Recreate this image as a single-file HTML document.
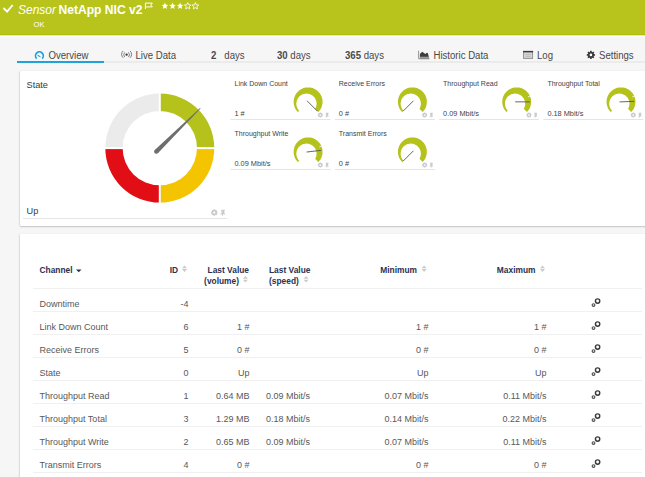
<!DOCTYPE html><html><head><meta charset="utf-8"><style>
*{box-sizing:border-box;margin:0;padding:0}
html,body{width:645px;height:477px;overflow:hidden;background:#f6f6f6;font-family:"Liberation Sans",sans-serif;color:#444}
.a{position:absolute;white-space:nowrap}
svg{position:absolute;left:0;top:0}
.tab{position:absolute;top:50.4px;font-size:9.6px;color:#484848;line-height:12px;white-space:nowrap;transform:scaleY(1.06);transform-origin:0 80%}
.tab b{color:#4a4a4a}
.panel{position:absolute;background:#fff;border-radius:1px;box-shadow:0 1px 1.5px rgba(0,0,0,0.2),-1px 0 1.5px rgba(0,0,0,0.08)}
.gt{position:absolute;font-size:7px;color:#3f3f3f;line-height:8px;white-space:nowrap}
.gl{position:absolute;height:1px;background:#e4e4e4}
.th{position:absolute;font-size:8.4px;font-weight:bold;color:#2b3150;line-height:10.6px;white-space:nowrap}
.td{position:absolute;font-size:9px;color:#585858;line-height:10px;white-space:nowrap;transform:scaleY(1.1);transform-origin:0 80%}
.r{text-align:right}
.rl{position:absolute;left:33px;width:608.5px;height:1px;background:#f0f0f0}
</style></head><body>
<div class="a" style="left:0;top:0;width:645px;height:34px;background:#b8c41c"></div>
<div class="a" style="left:0;top:34px;width:645px;height:1px;background:#b2be08"></div>
<div class="a" style="left:0;top:35px;width:645px;height:1px;background:#e4e8bc"></div>
<div class="a" style="left:0;top:36px;width:645px;height:1px;background:#fdfdfd"></div>
<svg width="645" height="40" style="z-index:2"><path d="M3.5 8.0 L7.1 11.7 L12.7 5.0" stroke="#fff" stroke-width="1.9" fill="none"/><path d="M145.4 9 V3.1 H152.3 L150.8 5.0 L152.3 6.9 H145.4" stroke="#fff" stroke-width="1" fill="none"/></svg>
<div class="a" style="left:18px;top:2.5px;font-size:12px;font-style:italic;color:#fff;line-height:14px">Sensor</div>
<div class="a" style="left:58.5px;top:2.5px;font-size:12.1px;font-weight:bold;color:#fff;line-height:14px">NetApp NIC v2</div>
<div class="a" style="left:33.5px;top:19.5px;font-size:7.6px;color:#fff;line-height:9px">OK</div>
<svg width="645" height="40" style="z-index:2"><polygon points="164.90,2.60 165.83,4.83 168.23,5.02 166.40,6.59 166.96,8.93 164.90,7.67 162.84,8.93 163.40,6.59 161.57,5.02 163.97,4.83" fill="#fff"/><polygon points="172.52,2.60 173.45,4.83 175.85,5.02 174.02,6.59 174.58,8.93 172.52,7.67 170.46,8.93 171.02,6.59 169.19,5.02 171.59,4.83" fill="#fff"/><polygon points="180.14,2.60 181.07,4.83 183.47,5.02 181.64,6.59 182.20,8.93 180.14,7.67 178.08,8.93 178.64,6.59 176.81,5.02 179.21,4.83" fill="#fff"/><polygon points="187.76,2.60 188.69,4.83 191.09,5.02 189.26,6.59 189.82,8.93 187.76,7.67 185.70,8.93 186.26,6.59 184.43,5.02 186.83,4.83" fill="none" stroke="#fff" stroke-width="0.85"/><polygon points="195.38,2.60 196.31,4.83 198.71,5.02 196.88,6.59 197.44,8.93 195.38,7.67 193.32,8.93 193.88,6.59 192.05,5.02 194.45,4.83" fill="none" stroke="#fff" stroke-width="0.85"/></svg>
<div class="a" style="left:17px;top:61px;width:628px;height:2px;background:#ebebeb"></div>
<div class="a" style="left:17px;top:61px;width:87px;height:2px;background:#1ea3db"></div>
<div class="tab" style="left:48.5px">Overview</div>
<div class="tab" style="left:135.5px">Live Data</div>
<div class="tab" style="left:211px"><b>2</b>&nbsp;&nbsp;&nbsp;days</div>
<div class="tab" style="left:277px"><b>30</b>&nbsp;days</div>
<div class="tab" style="left:345px"><b>365</b>&nbsp;days</div>
<div class="tab" style="left:433.5px">Historic Data</div>
<div class="tab" style="left:537px">Log</div>
<div class="tab" style="left:599px">Settings</div>
<svg width="645" height="70"><path d="M36.64 58.56 A3.9 3.9 0 1 1 42.16 58.56" stroke="#1d9fdb" stroke-width="1.7" fill="none"/><path d="M37.7 55.3 L40.4 56.9" stroke="#1d9fdb" stroke-width="1.1" fill="none"/><circle cx="126.6" cy="54.7" r="1.15" fill="#333"/><path d="M124.7 52.4 A3.6 3.6 0 0 0 124.7 57.1 M128.5 52.4 A3.6 3.6 0 0 1 128.5 57.1" stroke="#6a6a70" stroke-width="0.85" fill="none"/><path d="M123.1 50.9 A5.2 5.2 0 0 0 123.1 57.8 M130.1 50.9 A5.2 5.2 0 0 1 130.1 57.8" stroke="#6a6a70" stroke-width="0.85" fill="none"/><path d="M419.9 58.6 L419.9 54 L422.2 51.8 L425.4 54.1 L426.9 52.8 L427.9 53.2 L429.2 58.6 Z" fill="#3d3d3d"/><rect x="419.9" y="56.7" width="9.2" height="2" fill="#9a9a9a"/><path d="M418.6 50.7 V58.8 H429.3" stroke="#8a8a8a" stroke-width="0.9" fill="none"/><rect x="523.6" y="51.4" width="9" height="7" fill="#d6d6d6" stroke="#8a8a8a" stroke-width="0.9"/><rect x="523.1" y="50.9" width="10" height="1.5" fill="#3a3a3a"/><path d="M525.5 54.4 H530.8 M525.5 56.3 H530.8" stroke="#aaa" stroke-width="0.6"/></svg>
<svg width="645" height="70"><polygon points="589.99,51.94 590.17,50.76 591.63,50.76 591.81,51.94 592.36,52.16 593.31,51.46 594.34,52.49 593.64,53.44 593.86,53.99 595.04,54.17 595.04,55.63 593.86,55.81 593.64,56.36 594.34,57.31 593.31,58.34 592.36,57.64 591.81,57.86 591.63,59.04 590.17,59.04 589.99,57.86 589.44,57.64 588.49,58.34 587.46,57.31 588.16,56.36 587.94,55.81 586.76,55.63 586.76,54.17 587.94,53.99 588.16,53.44 587.46,52.49 588.49,51.46 589.44,52.16" fill="#3a3a3a"/><circle cx="590.90" cy="54.90" r="1.3" fill="#fff"/></svg>
<div class="panel" style="left:20px;top:70.5px;width:630px;height:155px"></div>
<div class="panel" style="left:19.5px;top:233.5px;width:630px;height:250px"></div>
<svg width="645" height="477"><path d="M105.30 148.10 A54.5 54.5 0 0 1 159.80 93.60 L159.80 110.90 A37.2 37.2 0 0 0 122.60 148.10 Z" fill="#ebebeb"/><path d="M159.80 93.60 A54.5 54.5 0 0 1 214.30 148.10 L197.00 148.10 A37.2 37.2 0 0 0 159.80 110.90 Z" fill="#b5c21c"/><path d="M214.30 148.10 A54.5 54.5 0 0 1 159.80 202.60 L159.80 185.30 A37.2 37.2 0 0 0 197.00 148.10 Z" fill="#f5c400"/><path d="M159.80 202.60 A54.5 54.5 0 0 1 105.30 148.10 L122.60 148.10 A37.2 37.2 0 0 0 159.80 185.30 Z" fill="#e10e16"/><rect x="158.80" y="92.60" width="2" height="111.00" fill="#fff"/><rect x="104.30" y="147.10" width="111.00" height="2" fill="#fff"/><path d="M157.84 153.17 L200.55 108.45 L200.05 107.95 L154.76 150.03 Z" fill="#6e6e6e"/><circle cx="156.30" cy="151.60" r="2.2" fill="#6e6e6e"/></svg>
<div class="a" style="left:26.5px;top:80px;font-size:9.2px;color:#3a3a3a;line-height:10px;transform:scaleY(1.08);transform-origin:0 80%">State</div>
<div class="a" style="left:26.5px;top:206px;font-size:9.2px;color:#3a3a3a;line-height:10px;transform:scaleY(1.08);transform-origin:0 80%">Up</div>
<div class="gl" style="left:23px;top:218px;width:204px"></div>
<svg width="645" height="477"><polygon points="213.47,209.87 213.73,209.35 214.87,209.35 215.13,209.87 215.64,210.08 216.19,209.90 217.00,210.71 216.82,211.26 217.03,211.77 217.55,212.03 217.55,213.17 217.03,213.43 216.82,213.94 217.00,214.49 216.19,215.30 215.64,215.12 215.13,215.33 214.87,215.85 213.73,215.85 213.47,215.33 212.96,215.12 212.41,215.30 211.60,214.49 211.78,213.94 211.57,213.43 211.05,213.17 211.05,212.03 211.57,211.77 211.78,211.26 211.60,210.71 212.41,209.90 212.96,210.08" fill="#c9cbcd"/><circle cx="214.30" cy="212.60" r="1.1" fill="#fff"/><polygon points="221.10,209.70 224.80,209.70 224.80,210.70 224.40,210.70 224.40,213.10 225.20,214.40 223.05,214.40 222.90,216.30 222.40,216.30 222.25,214.40 220.10,214.40 221.50,213.10 221.50,210.70 221.10,210.70" fill="#c9cbcd"/></svg>
<svg width="645" height="477"><path d="M297.88 112.07 L297.11 111.23 L296.41 110.34 L295.78 109.40 L295.22 108.41 L294.75 107.38 L294.36 106.32 L294.05 105.22 L293.83 104.11 L293.69 102.98 L293.65 101.85 L293.69 100.72 L293.83 99.59 L294.05 98.48 L294.36 97.38 L294.75 96.32 L295.22 95.29 L295.78 94.30 L296.41 93.36 L297.11 92.47 L297.88 91.63 L298.72 90.86 L299.61 90.16 L300.55 89.53 L301.54 88.97 L302.57 88.50 L303.63 88.11 L304.73 87.80 L305.84 87.58 L306.97 87.44 L308.10 87.40 L309.23 87.44 L310.36 87.58 L311.47 87.80 L312.57 88.11 L313.63 88.50 L314.66 88.97 L315.65 89.53 L316.59 90.16 L317.48 90.86 L318.32 91.63 L319.09 92.47 L319.79 93.36 L320.42 94.30 L320.98 95.29 L321.45 96.32 L321.84 97.38 L322.15 98.48 L322.37 99.59 L322.51 100.72 L322.55 101.85 L322.51 102.98 L322.37 104.11 L322.15 105.22 L321.84 106.32 L321.45 107.38 L320.98 108.41 L320.42 109.40 L319.79 110.34 L319.09 111.23 L318.32 112.07 L315.12 108.87 L315.50 108.17 L315.82 107.46 L316.08 106.74 L316.28 106.02 L316.42 105.30 L316.51 104.58 L316.55 103.88 L316.54 103.19 L316.48 102.51 L316.38 101.85 L316.24 101.21 L316.06 100.59 L315.84 99.99 L315.60 99.41 L315.32 98.86 L315.01 98.33 L314.67 97.83 L314.30 97.35 L313.91 96.89 L313.49 96.46 L313.05 96.05 L312.59 95.68 L312.10 95.33 L311.59 95.00 L311.06 94.71 L310.50 94.45 L309.93 94.22 L309.34 94.02 L308.73 93.86 L308.10 93.74 L307.45 93.65 L306.79 93.61 L306.12 93.61 L305.44 93.65 L304.74 93.75 L304.04 93.89 L303.34 94.09 L302.65 94.34 L301.96 94.66 L301.28 95.03 L300.61 95.46 L299.98 95.95 L299.37 96.50 L298.80 97.11 L298.27 97.78 L297.79 98.50 L297.37 99.27 L297.02 100.09 L296.73 100.96 L296.52 101.85 L296.39 102.77 L296.35 103.71 L296.40 104.66 L296.53 105.61 L296.76 106.55 L297.08 107.47 L297.49 108.35 L297.98 109.20 L298.56 110.00 L299.21 110.74 Z" fill="#b5c21c"/><path d="M307.04 100.79 L317.43 111.18" stroke="#555" stroke-width="0.9"/><polygon points="319.70,112.87 319.90,112.47 320.80,112.47 321.00,112.87 321.39,113.04 321.83,112.89 322.46,113.52 322.31,113.96 322.48,114.35 322.88,114.55 322.88,115.45 322.48,115.65 322.31,116.04 322.46,116.48 321.83,117.11 321.39,116.96 321.00,117.13 320.80,117.53 319.90,117.53 319.70,117.13 319.31,116.96 318.87,117.11 318.24,116.48 318.39,116.04 318.22,115.65 317.82,115.45 317.82,114.55 318.22,114.35 318.39,113.96 318.24,113.52 318.87,112.89 319.31,113.04" fill="#c9cbcd"/><circle cx="320.35" cy="115.00" r="0.8580000000000001" fill="#fff"/><polygon points="325.65,112.74 328.54,112.74 328.54,113.52 328.23,113.52 328.23,115.39 328.85,116.40 327.18,116.40 327.06,117.89 326.67,117.89 326.55,116.40 324.87,116.40 325.97,115.39 325.97,113.52 325.65,113.52" fill="#c9cbcd"/><rect x="230.50" y="119.00" width="100" height="1" fill="#e4e4e4"/><path d="M402.18 112.07 L401.41 111.23 L400.71 110.34 L400.08 109.40 L399.52 108.41 L399.05 107.38 L398.66 106.32 L398.35 105.22 L398.13 104.11 L397.99 102.98 L397.95 101.85 L397.99 100.72 L398.13 99.59 L398.35 98.48 L398.66 97.38 L399.05 96.32 L399.52 95.29 L400.08 94.30 L400.71 93.36 L401.41 92.47 L402.18 91.63 L403.02 90.86 L403.91 90.16 L404.85 89.53 L405.84 88.97 L406.87 88.50 L407.93 88.11 L409.03 87.80 L410.14 87.58 L411.27 87.44 L412.40 87.40 L413.53 87.44 L414.66 87.58 L415.77 87.80 L416.87 88.11 L417.93 88.50 L418.96 88.97 L419.95 89.53 L420.89 90.16 L421.78 90.86 L422.62 91.63 L423.39 92.47 L424.09 93.36 L424.72 94.30 L425.28 95.29 L425.75 96.32 L426.14 97.38 L426.45 98.48 L426.67 99.59 L426.81 100.72 L426.85 101.85 L426.81 102.98 L426.67 104.11 L426.45 105.22 L426.14 106.32 L425.75 107.38 L425.28 108.41 L424.72 109.40 L424.09 110.34 L423.39 111.23 L422.62 112.07 L419.42 108.87 L419.80 108.17 L420.12 107.46 L420.38 106.74 L420.58 106.02 L420.72 105.30 L420.81 104.58 L420.85 103.88 L420.84 103.19 L420.78 102.51 L420.68 101.85 L420.54 101.21 L420.36 100.59 L420.14 99.99 L419.90 99.41 L419.62 98.86 L419.31 98.33 L418.97 97.83 L418.60 97.35 L418.21 96.89 L417.79 96.46 L417.35 96.05 L416.89 95.68 L416.40 95.33 L415.89 95.00 L415.36 94.71 L414.80 94.45 L414.23 94.22 L413.64 94.02 L413.03 93.86 L412.40 93.74 L411.75 93.65 L411.09 93.61 L410.42 93.61 L409.74 93.65 L409.04 93.75 L408.34 93.89 L407.64 94.09 L406.95 94.34 L406.26 94.66 L405.58 95.03 L404.91 95.46 L404.28 95.95 L403.67 96.50 L403.10 97.11 L402.57 97.78 L402.09 98.50 L401.67 99.27 L401.32 100.09 L401.03 100.96 L400.82 101.85 L400.69 102.77 L400.65 103.71 L400.70 104.66 L400.83 105.61 L401.06 106.55 L401.38 107.47 L401.79 108.35 L402.28 109.20 L402.86 110.00 L403.51 110.74 Z" fill="#b5c21c"/><path d="M413.46 100.79 L403.07 111.18" stroke="#555" stroke-width="0.9"/><polygon points="424.00,112.87 424.20,112.47 425.10,112.47 425.30,112.87 425.69,113.04 426.13,112.89 426.76,113.52 426.61,113.96 426.78,114.35 427.18,114.55 427.18,115.45 426.78,115.65 426.61,116.04 426.76,116.48 426.13,117.11 425.69,116.96 425.30,117.13 425.10,117.53 424.20,117.53 424.00,117.13 423.61,116.96 423.17,117.11 422.54,116.48 422.69,116.04 422.52,115.65 422.12,115.45 422.12,114.55 422.52,114.35 422.69,113.96 422.54,113.52 423.17,112.89 423.61,113.04" fill="#c9cbcd"/><circle cx="424.65" cy="115.00" r="0.8580000000000001" fill="#fff"/><polygon points="429.95,112.74 432.84,112.74 432.84,113.52 432.53,113.52 432.53,115.39 433.15,116.40 431.47,116.40 431.36,117.89 430.97,117.89 430.85,116.40 429.17,116.40 430.27,115.39 430.27,113.52 429.95,113.52" fill="#c9cbcd"/><rect x="334.80" y="119.00" width="100" height="1" fill="#e4e4e4"/><path d="M506.48 112.07 L505.71 111.23 L505.01 110.34 L504.38 109.40 L503.82 108.41 L503.35 107.38 L502.96 106.32 L502.65 105.22 L502.43 104.11 L502.29 102.98 L502.25 101.85 L502.29 100.72 L502.43 99.59 L502.65 98.48 L502.96 97.38 L503.35 96.32 L503.82 95.29 L504.38 94.30 L505.01 93.36 L505.71 92.47 L506.48 91.63 L507.32 90.86 L508.21 90.16 L509.15 89.53 L510.14 88.97 L511.17 88.50 L512.23 88.11 L513.33 87.80 L514.44 87.58 L515.57 87.44 L516.70 87.40 L517.83 87.44 L518.96 87.58 L520.07 87.80 L521.17 88.11 L522.23 88.50 L523.26 88.97 L524.25 89.53 L525.19 90.16 L526.08 90.86 L526.92 91.63 L527.69 92.47 L528.39 93.36 L529.02 94.30 L529.58 95.29 L530.05 96.32 L530.44 97.38 L530.75 98.48 L530.97 99.59 L531.11 100.72 L531.15 101.85 L531.11 102.98 L530.97 104.11 L530.75 105.22 L530.44 106.32 L530.05 107.38 L529.58 108.41 L529.02 109.40 L528.39 110.34 L527.69 111.23 L526.92 112.07 L523.72 108.87 L524.10 108.17 L524.42 107.46 L524.68 106.74 L524.88 106.02 L525.02 105.30 L525.11 104.58 L525.15 103.88 L525.14 103.19 L525.08 102.51 L524.98 101.85 L524.84 101.21 L524.66 100.59 L524.44 99.99 L524.20 99.41 L523.92 98.86 L523.61 98.33 L523.27 97.83 L522.90 97.35 L522.51 96.89 L522.09 96.46 L521.65 96.05 L521.19 95.68 L520.70 95.33 L520.19 95.00 L519.66 94.71 L519.10 94.45 L518.53 94.22 L517.94 94.02 L517.33 93.86 L516.70 93.74 L516.05 93.65 L515.39 93.61 L514.72 93.61 L514.04 93.65 L513.34 93.75 L512.64 93.89 L511.94 94.09 L511.25 94.34 L510.56 94.66 L509.88 95.03 L509.21 95.46 L508.58 95.95 L507.97 96.50 L507.40 97.11 L506.87 97.78 L506.39 98.50 L505.97 99.27 L505.62 100.09 L505.33 100.96 L505.12 101.85 L504.99 102.77 L504.95 103.71 L505.00 104.66 L505.13 105.61 L505.36 106.55 L505.68 107.47 L506.09 108.35 L506.58 109.20 L507.16 110.00 L507.81 110.74 Z" fill="#b5c21c"/><path d="M527.98 96.95 L530.64 95.79" stroke="#fff" stroke-width="0.8"/><path d="M515.20 101.85 L529.90 101.85" stroke="#555" stroke-width="0.9"/><polygon points="528.30,112.87 528.50,112.47 529.40,112.47 529.60,112.87 529.99,113.04 530.43,112.89 531.06,113.52 530.91,113.96 531.08,114.35 531.48,114.55 531.48,115.45 531.08,115.65 530.91,116.04 531.06,116.48 530.43,117.11 529.99,116.96 529.60,117.13 529.40,117.53 528.50,117.53 528.30,117.13 527.91,116.96 527.47,117.11 526.84,116.48 526.99,116.04 526.82,115.65 526.42,115.45 526.42,114.55 526.82,114.35 526.99,113.96 526.84,113.52 527.47,112.89 527.91,113.04" fill="#c9cbcd"/><circle cx="528.95" cy="115.00" r="0.8580000000000001" fill="#fff"/><polygon points="534.25,112.74 537.14,112.74 537.14,113.52 536.83,113.52 536.83,115.39 537.45,116.40 535.78,116.40 535.66,117.89 535.27,117.89 535.15,116.40 533.47,116.40 534.57,115.39 534.57,113.52 534.25,113.52" fill="#c9cbcd"/><rect x="439.10" y="119.00" width="100" height="1" fill="#e4e4e4"/><path d="M610.78 112.07 L610.01 111.23 L609.31 110.34 L608.68 109.40 L608.12 108.41 L607.65 107.38 L607.26 106.32 L606.95 105.22 L606.73 104.11 L606.59 102.98 L606.55 101.85 L606.59 100.72 L606.73 99.59 L606.95 98.48 L607.26 97.38 L607.65 96.32 L608.12 95.29 L608.68 94.30 L609.31 93.36 L610.01 92.47 L610.78 91.63 L611.62 90.86 L612.51 90.16 L613.45 89.53 L614.44 88.97 L615.47 88.50 L616.53 88.11 L617.63 87.80 L618.74 87.58 L619.87 87.44 L621.00 87.40 L622.13 87.44 L623.26 87.58 L624.37 87.80 L625.47 88.11 L626.53 88.50 L627.56 88.97 L628.55 89.53 L629.49 90.16 L630.38 90.86 L631.22 91.63 L631.99 92.47 L632.69 93.36 L633.32 94.30 L633.88 95.29 L634.35 96.32 L634.74 97.38 L635.05 98.48 L635.27 99.59 L635.41 100.72 L635.45 101.85 L635.41 102.98 L635.27 104.11 L635.05 105.22 L634.74 106.32 L634.35 107.38 L633.88 108.41 L633.32 109.40 L632.69 110.34 L631.99 111.23 L631.22 112.07 L628.02 108.87 L628.40 108.17 L628.72 107.46 L628.98 106.74 L629.18 106.02 L629.32 105.30 L629.41 104.58 L629.45 103.88 L629.44 103.19 L629.38 102.51 L629.28 101.85 L629.14 101.21 L628.96 100.59 L628.74 99.99 L628.50 99.41 L628.22 98.86 L627.91 98.33 L627.57 97.83 L627.20 97.35 L626.81 96.89 L626.39 96.46 L625.95 96.05 L625.49 95.68 L625.00 95.33 L624.49 95.00 L623.96 94.71 L623.40 94.45 L622.83 94.22 L622.24 94.02 L621.63 93.86 L621.00 93.74 L620.35 93.65 L619.69 93.61 L619.02 93.61 L618.34 93.65 L617.64 93.75 L616.94 93.89 L616.24 94.09 L615.55 94.34 L614.86 94.66 L614.18 95.03 L613.51 95.46 L612.88 95.95 L612.27 96.50 L611.70 97.11 L611.17 97.78 L610.69 98.50 L610.27 99.27 L609.92 100.09 L609.63 100.96 L609.42 101.85 L609.29 102.77 L609.25 103.71 L609.30 104.66 L609.43 105.61 L609.66 106.55 L609.98 107.47 L610.39 108.35 L610.88 109.20 L611.46 110.00 L612.11 110.74 Z" fill="#b5c21c"/><path d="M632.28 96.95 L634.94 95.79" stroke="#fff" stroke-width="0.8"/><path d="M619.50 101.90 L634.19 101.39" stroke="#555" stroke-width="0.9"/><polygon points="632.60,112.87 632.80,112.47 633.70,112.47 633.90,112.87 634.29,113.04 634.73,112.89 635.36,113.52 635.21,113.96 635.38,114.35 635.78,114.55 635.78,115.45 635.38,115.65 635.21,116.04 635.36,116.48 634.73,117.11 634.29,116.96 633.90,117.13 633.70,117.53 632.80,117.53 632.60,117.13 632.21,116.96 631.77,117.11 631.14,116.48 631.29,116.04 631.12,115.65 630.72,115.45 630.72,114.55 631.12,114.35 631.29,113.96 631.14,113.52 631.77,112.89 632.21,113.04" fill="#c9cbcd"/><circle cx="633.25" cy="115.00" r="0.8580000000000001" fill="#fff"/><polygon points="638.55,112.74 641.44,112.74 641.44,113.52 641.13,113.52 641.13,115.39 641.75,116.40 640.08,116.40 639.96,117.89 639.57,117.89 639.45,116.40 637.77,116.40 638.87,115.39 638.87,113.52 638.55,113.52" fill="#c9cbcd"/><rect x="543.40" y="119.00" width="100" height="1" fill="#e4e4e4"/><path d="M297.88 162.07 L297.11 161.23 L296.41 160.34 L295.78 159.40 L295.22 158.41 L294.75 157.38 L294.36 156.32 L294.05 155.22 L293.83 154.11 L293.69 152.98 L293.65 151.85 L293.69 150.72 L293.83 149.59 L294.05 148.48 L294.36 147.38 L294.75 146.32 L295.22 145.29 L295.78 144.30 L296.41 143.36 L297.11 142.47 L297.88 141.63 L298.72 140.86 L299.61 140.16 L300.55 139.53 L301.54 138.97 L302.57 138.50 L303.63 138.11 L304.73 137.80 L305.84 137.58 L306.97 137.44 L308.10 137.40 L309.23 137.44 L310.36 137.58 L311.47 137.80 L312.57 138.11 L313.63 138.50 L314.66 138.97 L315.65 139.53 L316.59 140.16 L317.48 140.86 L318.32 141.63 L319.09 142.47 L319.79 143.36 L320.42 144.30 L320.98 145.29 L321.45 146.32 L321.84 147.38 L322.15 148.48 L322.37 149.59 L322.51 150.72 L322.55 151.85 L322.51 152.98 L322.37 154.11 L322.15 155.22 L321.84 156.32 L321.45 157.38 L320.98 158.41 L320.42 159.40 L319.79 160.34 L319.09 161.23 L318.32 162.07 L315.12 158.87 L315.50 158.17 L315.82 157.46 L316.08 156.74 L316.28 156.02 L316.42 155.30 L316.51 154.58 L316.55 153.88 L316.54 153.19 L316.48 152.51 L316.38 151.85 L316.24 151.21 L316.06 150.59 L315.84 149.99 L315.60 149.41 L315.32 148.86 L315.01 148.33 L314.67 147.83 L314.30 147.35 L313.91 146.89 L313.49 146.46 L313.05 146.05 L312.59 145.68 L312.10 145.33 L311.59 145.00 L311.06 144.71 L310.50 144.45 L309.93 144.22 L309.34 144.02 L308.73 143.86 L308.10 143.74 L307.45 143.65 L306.79 143.61 L306.12 143.61 L305.44 143.65 L304.74 143.75 L304.04 143.89 L303.34 144.09 L302.65 144.34 L301.96 144.66 L301.28 145.03 L300.61 145.46 L299.98 145.95 L299.37 146.50 L298.80 147.11 L298.27 147.78 L297.79 148.50 L297.37 149.27 L297.02 150.09 L296.73 150.96 L296.52 151.85 L296.39 152.77 L296.35 153.71 L296.40 154.66 L296.53 155.61 L296.76 156.55 L297.08 157.47 L297.49 158.35 L297.98 159.20 L298.56 160.00 L299.21 160.74 Z" fill="#b5c21c"/><path d="M319.38 146.95 L322.04 145.79" stroke="#fff" stroke-width="0.8"/><path d="M306.61 152.02 L321.21 150.33" stroke="#555" stroke-width="0.9"/><polygon points="319.70,162.87 319.90,162.47 320.80,162.47 321.00,162.87 321.39,163.04 321.83,162.89 322.46,163.52 322.31,163.96 322.48,164.35 322.88,164.55 322.88,165.45 322.48,165.65 322.31,166.04 322.46,166.48 321.83,167.11 321.39,166.96 321.00,167.13 320.80,167.53 319.90,167.53 319.70,167.13 319.31,166.96 318.87,167.11 318.24,166.48 318.39,166.04 318.22,165.65 317.82,165.45 317.82,164.55 318.22,164.35 318.39,163.96 318.24,163.52 318.87,162.89 319.31,163.04" fill="#c9cbcd"/><circle cx="320.35" cy="165.00" r="0.8580000000000001" fill="#fff"/><polygon points="325.65,162.74 328.54,162.74 328.54,163.52 328.23,163.52 328.23,165.39 328.85,166.40 327.18,166.40 327.06,167.89 326.67,167.89 326.55,166.40 324.87,166.40 325.97,165.39 325.97,163.52 325.65,163.52" fill="#c9cbcd"/><rect x="230.50" y="169.00" width="100" height="1" fill="#e4e4e4"/><path d="M402.18 162.07 L401.41 161.23 L400.71 160.34 L400.08 159.40 L399.52 158.41 L399.05 157.38 L398.66 156.32 L398.35 155.22 L398.13 154.11 L397.99 152.98 L397.95 151.85 L397.99 150.72 L398.13 149.59 L398.35 148.48 L398.66 147.38 L399.05 146.32 L399.52 145.29 L400.08 144.30 L400.71 143.36 L401.41 142.47 L402.18 141.63 L403.02 140.86 L403.91 140.16 L404.85 139.53 L405.84 138.97 L406.87 138.50 L407.93 138.11 L409.03 137.80 L410.14 137.58 L411.27 137.44 L412.40 137.40 L413.53 137.44 L414.66 137.58 L415.77 137.80 L416.87 138.11 L417.93 138.50 L418.96 138.97 L419.95 139.53 L420.89 140.16 L421.78 140.86 L422.62 141.63 L423.39 142.47 L424.09 143.36 L424.72 144.30 L425.28 145.29 L425.75 146.32 L426.14 147.38 L426.45 148.48 L426.67 149.59 L426.81 150.72 L426.85 151.85 L426.81 152.98 L426.67 154.11 L426.45 155.22 L426.14 156.32 L425.75 157.38 L425.28 158.41 L424.72 159.40 L424.09 160.34 L423.39 161.23 L422.62 162.07 L419.42 158.87 L419.80 158.17 L420.12 157.46 L420.38 156.74 L420.58 156.02 L420.72 155.30 L420.81 154.58 L420.85 153.88 L420.84 153.19 L420.78 152.51 L420.68 151.85 L420.54 151.21 L420.36 150.59 L420.14 149.99 L419.90 149.41 L419.62 148.86 L419.31 148.33 L418.97 147.83 L418.60 147.35 L418.21 146.89 L417.79 146.46 L417.35 146.05 L416.89 145.68 L416.40 145.33 L415.89 145.00 L415.36 144.71 L414.80 144.45 L414.23 144.22 L413.64 144.02 L413.03 143.86 L412.40 143.74 L411.75 143.65 L411.09 143.61 L410.42 143.61 L409.74 143.65 L409.04 143.75 L408.34 143.89 L407.64 144.09 L406.95 144.34 L406.26 144.66 L405.58 145.03 L404.91 145.46 L404.28 145.95 L403.67 146.50 L403.10 147.11 L402.57 147.78 L402.09 148.50 L401.67 149.27 L401.32 150.09 L401.03 150.96 L400.82 151.85 L400.69 152.77 L400.65 153.71 L400.70 154.66 L400.83 155.61 L401.06 156.55 L401.38 157.47 L401.79 158.35 L402.28 159.20 L402.86 160.00 L403.51 160.74 Z" fill="#b5c21c"/><path d="M413.46 150.79 L403.07 161.18" stroke="#555" stroke-width="0.9"/><polygon points="424.00,162.87 424.20,162.47 425.10,162.47 425.30,162.87 425.69,163.04 426.13,162.89 426.76,163.52 426.61,163.96 426.78,164.35 427.18,164.55 427.18,165.45 426.78,165.65 426.61,166.04 426.76,166.48 426.13,167.11 425.69,166.96 425.30,167.13 425.10,167.53 424.20,167.53 424.00,167.13 423.61,166.96 423.17,167.11 422.54,166.48 422.69,166.04 422.52,165.65 422.12,165.45 422.12,164.55 422.52,164.35 422.69,163.96 422.54,163.52 423.17,162.89 423.61,163.04" fill="#c9cbcd"/><circle cx="424.65" cy="165.00" r="0.8580000000000001" fill="#fff"/><polygon points="429.95,162.74 432.84,162.74 432.84,163.52 432.53,163.52 432.53,165.39 433.15,166.40 431.47,166.40 431.36,167.89 430.97,167.89 430.85,166.40 429.17,166.40 430.27,165.39 430.27,163.52 429.95,163.52" fill="#c9cbcd"/><rect x="334.80" y="169.00" width="100" height="1" fill="#e4e4e4"/></svg>
<div class="gt" style="left:234.50px;top:80.00px">Link Down Count</div>
<div class="gt" style="left:234.50px;top:109.60px;font-size:7.35px;transform:scaleY(1.1);transform-origin:0 100%">1 #</div>
<div class="gt" style="left:338.80px;top:80.00px">Receive Errors</div>
<div class="gt" style="left:338.80px;top:109.60px;font-size:7.35px;transform:scaleY(1.1);transform-origin:0 100%">0 #</div>
<div class="gt" style="left:443.10px;top:80.00px">Throughput Read</div>
<div class="gt" style="left:443.10px;top:109.60px;font-size:7.35px;transform:scaleY(1.1);transform-origin:0 100%">0.09 Mbit/s</div>
<div class="gt" style="left:547.40px;top:80.00px">Throughput Total</div>
<div class="gt" style="left:547.40px;top:109.60px;font-size:7.35px;transform:scaleY(1.1);transform-origin:0 100%">0.18 Mbit/s</div>
<div class="gt" style="left:234.50px;top:130.00px">Throughput Write</div>
<div class="gt" style="left:234.50px;top:159.60px;font-size:7.35px;transform:scaleY(1.1);transform-origin:0 100%">0.09 Mbit/s</div>
<div class="gt" style="left:338.80px;top:130.00px">Transmit Errors</div>
<div class="gt" style="left:338.80px;top:159.60px;font-size:7.35px;transform:scaleY(1.1);transform-origin:0 100%">0 #</div>
<div class="th" style="left:39.5px;top:264.5px">Channel</div>
<svg width="645" height="477"><path d="M76 269.6 H81.5 L78.75 272.3 Z" fill="#2b3150"/></svg>
<div class="th r" style="left:120px;width:58px;top:264.5px">ID</div>
<div class="th r" style="left:180px;width:69px;top:264.5px">Last Value</div>
<div class="th r" style="left:180px;width:59px;top:275.9px">(volume)</div>
<div class="th" style="left:269px;top:264.5px">Last Value</div>
<div class="th" style="left:269px;top:275.9px">(speed)</div>
<div class="th r" style="left:340px;width:77px;top:264.5px">Minimum</div>
<div class="th r" style="left:460px;width:75.5px;top:264.5px">Maximum</div>
<svg width="645" height="477"><path d="M182.00 268.20 L184.50 265.40 L187.00 268.20 Z M182.00 269.10 L184.50 271.90 L187.00 269.10 Z" fill="#cbcbcb"/><path d="M242.90 278.80 L245.40 276.00 L247.90 278.80 Z M242.90 279.70 L245.40 282.50 L247.90 279.70 Z" fill="#cbcbcb"/><path d="M303.60 278.80 L306.10 276.00 L308.60 278.80 Z M303.60 279.70 L306.10 282.50 L308.60 279.70 Z" fill="#cbcbcb"/><path d="M421.60 268.20 L424.10 265.40 L426.60 268.20 Z M421.60 269.10 L424.10 271.90 L426.60 269.10 Z" fill="#cbcbcb"/><path d="M540.00 268.20 L542.50 265.40 L545.00 268.20 Z M540.00 269.10 L542.50 271.90 L545.00 269.10 Z" fill="#cbcbcb"/></svg>
<div class="rl" style="top:288px"></div>
<div class="td" style="left:39.5px;top:299.00px">Downtime</div>
<div class="td r" style="left:140px;width:48.5px;top:299.00px">-4</div>
<div class="rl" style="top:311.00px"></div>
<div class="td" style="left:39.5px;top:322.00px">Link Down Count</div>
<div class="td r" style="left:140px;width:48.5px;top:322.00px">6</div>
<div class="td r" style="left:190px;width:59.5px;top:322.00px">1 #</div>
<div class="td r" style="left:340px;width:88.5px;top:322.00px">1 #</div>
<div class="td r" style="left:460px;width:86.5px;top:322.00px">1 #</div>
<div class="rl" style="top:334.00px"></div>
<div class="td" style="left:39.5px;top:345.00px">Receive Errors</div>
<div class="td r" style="left:140px;width:48.5px;top:345.00px">5</div>
<div class="td r" style="left:190px;width:59.5px;top:345.00px">0 #</div>
<div class="td r" style="left:340px;width:88.5px;top:345.00px">0 #</div>
<div class="td r" style="left:460px;width:86.5px;top:345.00px">0 #</div>
<div class="rl" style="top:357.00px"></div>
<div class="td" style="left:39.5px;top:368.00px">State</div>
<div class="td r" style="left:140px;width:48.5px;top:368.00px">0</div>
<div class="td r" style="left:190px;width:59.5px;top:368.00px">Up</div>
<div class="td r" style="left:340px;width:88.5px;top:368.00px">Up</div>
<div class="td r" style="left:460px;width:86.5px;top:368.00px">Up</div>
<div class="rl" style="top:380.00px"></div>
<div class="td" style="left:39.5px;top:391.00px">Throughput Read</div>
<div class="td r" style="left:140px;width:48.5px;top:391.00px">1</div>
<div class="td r" style="left:190px;width:59.5px;top:391.00px">0.64 MB</div>
<div class="td r" style="left:250px;width:60px;top:391.00px">0.09 Mbit/s</div>
<div class="td r" style="left:340px;width:88.5px;top:391.00px">0.07 Mbit/s</div>
<div class="td r" style="left:460px;width:86.5px;top:391.00px">0.11 Mbit/s</div>
<div class="rl" style="top:403.00px"></div>
<div class="td" style="left:39.5px;top:414.00px">Throughput Total</div>
<div class="td r" style="left:140px;width:48.5px;top:414.00px">3</div>
<div class="td r" style="left:190px;width:59.5px;top:414.00px">1.29 MB</div>
<div class="td r" style="left:250px;width:60px;top:414.00px">0.18 Mbit/s</div>
<div class="td r" style="left:340px;width:88.5px;top:414.00px">0.14 Mbit/s</div>
<div class="td r" style="left:460px;width:86.5px;top:414.00px">0.22 Mbit/s</div>
<div class="rl" style="top:426.00px"></div>
<div class="td" style="left:39.5px;top:437.00px">Throughput Write</div>
<div class="td r" style="left:140px;width:48.5px;top:437.00px">2</div>
<div class="td r" style="left:190px;width:59.5px;top:437.00px">0.65 MB</div>
<div class="td r" style="left:250px;width:60px;top:437.00px">0.09 Mbit/s</div>
<div class="td r" style="left:340px;width:88.5px;top:437.00px">0.07 Mbit/s</div>
<div class="td r" style="left:460px;width:86.5px;top:437.00px">0.11 Mbit/s</div>
<div class="rl" style="top:449.00px"></div>
<div class="td" style="left:39.5px;top:460.00px">Transmit Errors</div>
<div class="td r" style="left:140px;width:48.5px;top:460.00px">4</div>
<div class="td r" style="left:190px;width:59.5px;top:460.00px">0 #</div>
<div class="td r" style="left:340px;width:88.5px;top:460.00px">0 #</div>
<div class="td r" style="left:460px;width:86.5px;top:460.00px">0 #</div>
<div class="rl" style="top:472.00px"></div>
<svg width="645" height="477"><circle cx="597.6" cy="301.00" r="2.15" fill="none" stroke="#3a3a3a" stroke-width="1.45"/><circle cx="593.5" cy="305.10" r="1.35" fill="none" stroke="#505050" stroke-width="1.2"/><circle cx="597.6" cy="324.00" r="2.15" fill="none" stroke="#3a3a3a" stroke-width="1.45"/><circle cx="593.5" cy="328.10" r="1.35" fill="none" stroke="#505050" stroke-width="1.2"/><circle cx="597.6" cy="347.00" r="2.15" fill="none" stroke="#3a3a3a" stroke-width="1.45"/><circle cx="593.5" cy="351.10" r="1.35" fill="none" stroke="#505050" stroke-width="1.2"/><circle cx="597.6" cy="370.00" r="2.15" fill="none" stroke="#3a3a3a" stroke-width="1.45"/><circle cx="593.5" cy="374.10" r="1.35" fill="none" stroke="#505050" stroke-width="1.2"/><circle cx="597.6" cy="393.00" r="2.15" fill="none" stroke="#3a3a3a" stroke-width="1.45"/><circle cx="593.5" cy="397.10" r="1.35" fill="none" stroke="#505050" stroke-width="1.2"/><circle cx="597.6" cy="416.00" r="2.15" fill="none" stroke="#3a3a3a" stroke-width="1.45"/><circle cx="593.5" cy="420.10" r="1.35" fill="none" stroke="#505050" stroke-width="1.2"/><circle cx="597.6" cy="439.00" r="2.15" fill="none" stroke="#3a3a3a" stroke-width="1.45"/><circle cx="593.5" cy="443.10" r="1.35" fill="none" stroke="#505050" stroke-width="1.2"/><circle cx="597.6" cy="462.00" r="2.15" fill="none" stroke="#3a3a3a" stroke-width="1.45"/><circle cx="593.5" cy="466.10" r="1.35" fill="none" stroke="#505050" stroke-width="1.2"/></svg>
</body></html>
